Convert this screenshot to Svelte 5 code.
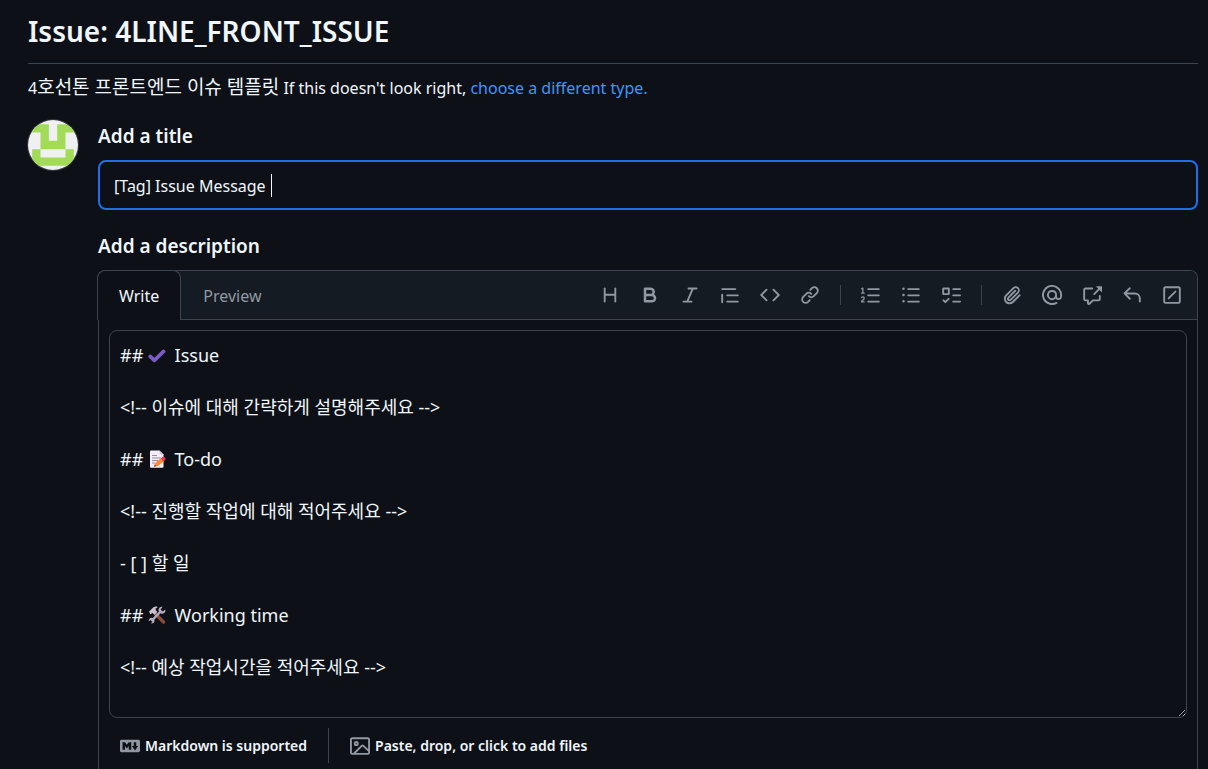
<script>
	let title = "[Tag] Issue Message ";
	let tab = "write";
	let body = [
		"## ✔️ Issue",
		"",
		"<!-- 이슈에 대해 간략하게 설명해주세요 -->",
		"",
		"## 📝 To-do",
		"",
		"<!-- 진행할 작업에 대해 적어주세요 -->",
		"",
		"- [ ] 할 일",
		"",
		"## 🛠️ Working time",
		"",
		"<!-- 예상 작업시간을 적어주세요 -->",
		"",
	].join("\n");

	const tools = [
		[
			{
				name: "Heading",
				d: "M3.75 2a.75.75 0 0 1 .75.75V7h7V2.75a.75.75 0 0 1 1.5 0v10.5a.75.75 0 0 1-1.5 0V8.5h-7v4.75a.75.75 0 0 1-1.5 0V2.75A.75.75 0 0 1 3.75 2Z",
			},
			{
				name: "Bold",
				d: "M4 2h4.5a3.501 3.501 0 0 1 2.852 5.53A3.499 3.499 0 0 1 9.5 14H4a1 1 0 0 1-1-1V3a1 1 0 0 1 1-1Zm1 7v3h4.5a1.5 1.5 0 0 0 0-3Zm3.5-2a1.5 1.5 0 0 0 0-3H5v3Z",
			},
			{
				name: "Italic",
				d: "M6 2.75A.75.75 0 0 1 6.75 2h6.5a.75.75 0 0 1 0 1.5h-2.505l-3.858 9H9.25a.75.75 0 0 1 0 1.5h-6.5a.75.75 0 0 1 0-1.5h2.505l3.858-9H6.75A.75.75 0 0 1 6 2.75Z",
			},
			{
				name: "Quote",
				d: "M1.75 2.5h10.5a.75.75 0 0 1 0 1.5H1.75a.75.75 0 0 1 0-1.5Zm4 5h8.5a.75.75 0 0 1 0 1.5h-8.5a.75.75 0 0 1 0-1.5Zm0 5h8.5a.75.75 0 0 1 0 1.5h-8.5a.75.75 0 0 1 0-1.5ZM2.5 7.75v6a.75.75 0 0 1-1.5 0v-6a.75.75 0 0 1 1.5 0Z",
			},
			{
				name: "Code",
				d: "m11.28 3.22 4.25 4.25a.75.75 0 0 1 0 1.06l-4.25 4.25a.749.749 0 0 1-1.275-.326.749.749 0 0 1 .215-.734L13.94 8l-3.72-3.72a.749.749 0 0 1 .326-1.275.749.749 0 0 1 .734.215Zm-6.56 0a.751.751 0 0 1 1.042.018.751.751 0 0 1 .018 1.042L2.06 8l3.72 3.72a.749.749 0 0 1-.326 1.275.749.749 0 0 1-.734-.215L.47 8.53a.75.75 0 0 1 0-1.06Z",
			},
			{
				name: "Link",
				d: "m7.775 3.275 1.25-1.25a3.5 3.5 0 1 1 4.95 4.95l-2.5 2.5a3.5 3.5 0 0 1-4.95 0 .751.751 0 0 1 .018-1.042.751.751 0 0 1 1.042-.018 1.998 1.998 0 0 0 2.83 0l2.5-2.5a2.002 2.002 0 0 0-2.83-2.83l-1.25 1.25a.751.751 0 0 1-1.042-.018.751.751 0 0 1-.018-1.042Zm-4.69 9.64a1.998 1.998 0 0 0 2.83 0l1.25-1.25a.751.751 0 0 1 1.042.018.751.751 0 0 1 .018 1.042l-1.25 1.25a3.5 3.5 0 1 1-4.95-4.95l2.5-2.5a3.5 3.5 0 0 1 4.95 0 .751.751 0 0 1-.018 1.042.751.751 0 0 1-1.042.018 1.998 1.998 0 0 0-2.83 0l-2.5 2.5a1.998 1.998 0 0 0 0 2.83Z",
			},
		],
		[
			{
				name: "Numbered list",
				d: "M5 3.25a.75.75 0 0 1 .75-.75h8.5a.75.75 0 0 1 0 1.5h-8.5A.75.75 0 0 1 5 3.25Zm0 5a.75.75 0 0 1 .75-.75h8.5a.75.75 0 0 1 0 1.5h-8.5A.75.75 0 0 1 5 8.25Zm0 5a.75.75 0 0 1 .75-.75h8.5a.75.75 0 0 1 0 1.5h-8.5a.75.75 0 0 1-.75-.75ZM.924 10.32a.5.5 0 0 1-.851-.525c.1-.16.219-.285.359-.4.228-.19.588-.395 1.068-.395.468 0 .858.181 1.126.484.259.294.377.673.377 1.038 0 .987-.686 1.495-1.156 1.845l-.047.035c-.303.225-.522.4-.654.598h1.357a.5.5 0 0 1 0 1H.5a.5.5 0 0 1-.5-.5c0-1.005.692-1.52 1.167-1.875l.035-.025c.531-.396.8-.625.8-1.078a.57.57 0 0 0-.128-.376C1.806 10.068 1.695 10 1.5 10a.658.658 0 0 0-.429.163.835.835 0 0 0-.147.157ZM2.003 2.5V6h.503a.5.5 0 0 1 0 1H.5a.5.5 0 0 1 0-1h.503V3.308l-.28.14a.5.5 0 0 1-.446-.895l1.003-.5a.5.5 0 0 1 .723.447Z",
			},
			{
				name: "Unordered list",
				d: "M5.75 2.5h8.5a.75.75 0 0 1 0 1.5h-8.5a.75.75 0 0 1 0-1.5Zm0 5h8.5a.75.75 0 0 1 0 1.5h-8.5a.75.75 0 0 1 0-1.5Zm0 5h8.5a.75.75 0 0 1 0 1.5h-8.5a.75.75 0 0 1 0-1.5ZM2 14a1 1 0 1 1 0-2 1 1 0 0 1 0 2Zm1-6a1 1 0 1 1-2 0 1 1 0 0 1 2 0ZM2 4a1 1 0 1 1 0-2 1 1 0 0 1 0 2Z",
			},
			{
				name: "Task list",
				d: "M2 2h4a1 1 0 0 1 1 1v4a1 1 0 0 1-1 1H2a1 1 0 0 1-1-1V3a1 1 0 0 1 1-1Zm4.655 8.595a.75.75 0 0 1 0 1.06L4.03 14.28a.75.75 0 0 1-1.06 0l-1.5-1.5a.749.749 0 0 1 .326-1.275.749.749 0 0 1 .734.215l.97.97 2.095-2.095a.75.75 0 0 1 1.06 0ZM9.75 2.5h5.5a.75.75 0 0 1 0 1.5h-5.5a.75.75 0 0 1 0-1.5Zm0 5h5.5a.75.75 0 0 1 0 1.5h-5.5a.75.75 0 0 1 0-1.5Zm0 5h5.5a.75.75 0 0 1 0 1.5h-5.5a.75.75 0 0 1 0-1.5Zm-7.25-9v3h3v-3Z",
			},
		],
		[
			{
				name: "Attach files",
				d: "M12.212 3.02a1.753 1.753 0 0 0-2.478.003l-5.83 5.83a3.007 3.007 0 0 0-.88 2.127c0 .795.315 1.551.88 2.116.567.567 1.333.89 2.126.89.79 0 1.548-.321 2.116-.89l5.48-5.48a.75.75 0 0 1 1.061 1.06l-5.48 5.48a4.492 4.492 0 0 1-3.177 1.33c-1.2 0-2.345-.487-3.187-1.33a4.483 4.483 0 0 1-1.32-3.177c0-1.195.475-2.341 1.32-3.186l5.83-5.83a3.25 3.25 0 0 1 5.553 2.297c0 .863-.343 1.691-.953 2.301L7.439 12.39c-.375.377-.884.59-1.416.593a1.998 1.998 0 0 1-1.412-.593 1.992 1.992 0 0 1 0-2.828l5.48-5.48a.751.751 0 0 1 1.042.018.751.751 0 0 1 .018 1.042l-5.48 5.48a.492.492 0 0 0 0 .707.499.499 0 0 0 .352.154.51.51 0 0 0 .356-.154l5.833-5.827a1.755 1.755 0 0 0 0-2.481Z",
			},
			{
				name: "Mention",
				d: "M4.75 2.37a6.501 6.501 0 0 0 6.5 11.26.75.75 0 0 1 .75 1.298A7.999 7.999 0 0 1 .989 4.148 8 8 0 0 1 16 7.75v1.5a2.75 2.75 0 0 1-5.072 1.475 3.999 3.999 0 0 1-6.65-4.19A4 4 0 0 1 12 8v1.25a1.25 1.25 0 0 0 2.5 0V7.867a6.5 6.5 0 0 0-9.75-5.496ZM10.5 8a2.5 2.5 0 1 0-5 0 2.5 2.5 0 0 0 5 0Z",
			},
			{
				name: "Reference",
				d: "M2.75 3.5a.25.25 0 0 0-.25.25v7.5c0 .138.112.25.25.25h2a.75.75 0 0 1 .75.75v2.19l2.72-2.72a.749.749 0 0 1 .53-.22h4.5a.25.25 0 0 0 .25-.25v-2.5a.75.75 0 0 1 1.5 0v2.5A1.75 1.75 0 0 1 13.25 13H9.06l-2.573 2.573A1.458 1.458 0 0 1 4 14.543V13H2.75A1.75 1.75 0 0 1 1 11.25v-7.5C1 2.784 1.784 2 2.75 2h5.5a.75.75 0 0 1 0 1.5ZM16 1.25v4.146a.25.25 0 0 1-.427.177L14.03 4.03l-3.75 3.75a.749.749 0 0 1-1.275-.326.749.749 0 0 1 .215-.734l3.75-3.75-1.543-1.543A.25.25 0 0 1 11.604 1h4.146a.25.25 0 0 1 .25.25Z",
			},
			{
				name: "Saved replies",
				d: "M6.78 1.97a.75.75 0 0 1 0 1.06L3.81 6h6.44A4.75 4.75 0 0 1 15 10.75v2.5a.75.75 0 0 1-1.5 0v-2.5a3.25 3.25 0 0 0-3.25-3.25H3.81l2.97 2.97a.749.749 0 0 1-.326 1.275.749.749 0 0 1-.734-.215L1.47 7.28a.75.75 0 0 1 0-1.06l4.25-4.25a.75.75 0 0 1 1.06 0Z",
			},
			{
				name: "Slash commands",
				d: "M13.25 1c.966 0 1.75.784 1.75 1.75v10.5A1.75 1.75 0 0 1 13.25 15H2.75A1.75 1.75 0 0 1 1 13.25V2.75C1 1.784 1.784 1 2.75 1ZM2.75 2.5a.25.25 0 0 0-.25.25v10.5c0 .138.112.25.25.25h10.5a.25.25 0 0 0 .25-.25V2.75a.25.25 0 0 0-.25-.25Zm8.53 3.28-5.5 5.5a.75.75 0 0 1-1.06-1.06l5.5-5.5a.75.75 0 0 1 1.06 1.06Z",
			},
		],
	];
</script>

<main>
	<header>
		<h1>Issue: 4LINE_FRONT_ISSUE</h1>
	</header>

	<p class="about">
		4<span lang="ko">호선톤 프론트엔드 이슈 템플릿</span> If this doesn't look right,
		<a href="#choose">choose a different type.</a>
	</p>

	<div class="issue">
		<svg class="avatar" viewBox="0 0 6 6" role="img" aria-label="avatar">
			<rect width="6" height="6" fill="#f0f0f0" />
			<path
				fill="#a1db58"
				d="M.5.5h2v2h1v-2h2v1h-1v2h1v2h-5v-2h1v-2h-1zM1.5 3.5v1h3v-1z"
				fill-rule="evenodd"
			/>
		</svg>

		<form on:submit|preventDefault>
			<label for="title">Add a title</label>
			<div class="title">
				<input id="title" type="text" bind:value={title} />
				<span class="caret"></span>
			</div>

			<label for="body">Add a description</label>
			<div class="editor">
				<div class="bar">
					<div class="tabs">
						<button type="button" class:active={tab === "write"} on:click={() => (tab = "write")}>
							Write
						</button>
						<button type="button" class:active={tab === "preview"} on:click={() => (tab = "preview")}>
							Preview
						</button>
					</div>
					<div class="tools">
						{#each tools as group}
							<div class="group">
								{#each group as t}
									<button type="button" aria-label={t.name}>
										<svg viewBox="0 0 16 16"><path d={t.d} /></svg>
									</button>
								{/each}
							</div>
						{/each}
					</div>
				</div>

				<div class="field">
					<textarea id="body" rows="14" spellcheck="false" bind:value={body}></textarea>

					<!-- own emoji set, laid over the system glyphs -->
					<span class="emoji check">
						<svg viewBox="0 0 18 18">
							<path
								d="M2.2 10.4 6.4 14.4 15.6 5.4"
								fill="none"
								stroke="#7b5cc6"
								stroke-width="3.6"
								stroke-linecap="round"
								stroke-linejoin="round"
							/>
						</svg>
					</span>
					<span class="emoji memo">
						<svg viewBox="0 0 18 18">
							<path d="M2 1.5Q2 .5 3 .5h8.5l4 4V17q0 .8-1 .8H3q-1 0-1-1z" fill="#f3eef8" />
							<path d="M11.5 .5v3q0 1 1 1h3z" fill="#cdc4d6" />
							<path d="M4 5.5h5M4 8h9M4 10.5h6M4 13h3" stroke="#998ea4" stroke-width="1" />
							<path d="M6 16.8 7.4 12.8 13.2 8 16 11.2 10 16z" fill="#ff8a33" />
							<path d="M6 16.8 6.8 14.4 8.4 16.1z" fill="#5b4a55" />
							<path d="m12.8 8.4 1.9-1.7q.8-.5 1.5.2l1.2 1.4q.5.8-.2 1.4l-1.6 1.7z" fill="#f4335a" />
						</svg>
					</span>
					<span class="emoji wrench">
						<svg viewBox="0 0 18 18">
							<path d="m7.5 8 8 8" stroke="#8a4b38" stroke-width="3.4" stroke-linecap="round" />
							<path d="M3.5 15 13.5 4.5" stroke="#b4acbc" stroke-width="2.4" />
							<path
								d="M14.6 .8 12.8 3.2l.4 1.8 1.8.3 2.3-1.9q.6 2.2-1 3.5-1.8 1.3-3.6.5L10.6 5.3Q10 3 11.4 1.7 12.8.3 14.6.8zM.8 15.6q-.5-2 .9-3.2 1.3-1.1 3-.5l1.6 1.5q.7 1.7-.4 3.1-1.2 1.2-2.9.9l1.3-1.7-.3-1.3-1.4-.3z"
								fill="#b4acbc"
							/>
							<path d="M1 5.4 5.8 1q1.6-1 3.3-.4l.4 1-1.9.9.2 1.7 1.5 1.7-2.8 2.9-1.9-1.9-2.3 1.4z" fill="#c9c1d0" />
						</svg>
					</span>
				</div>

				<div class="footer">
					<a href="#markdown">
						<svg viewBox="0 0 16 16">
							<path
								d="M14.85 3c.63 0 1.15.52 1.14 1.15v7.7c0 .63-.51 1.15-1.15 1.15H1.15C.52 13 0 12.48 0 11.84V4.15C0 3.52.52 3 1.15 3ZM9 11V5H7L5.5 7 4 5H2v6h2V8l1.5 1.92L7 8v3Zm2.99.5L14.5 8H13V5h-2v3H9.5Z"
							/>
						</svg>
						Markdown is supported
					</a>
					<button type="button">
						<svg viewBox="0 0 16 16">
							<path
								d="M16 13.25A1.75 1.75 0 0 1 14.25 15H1.75A1.75 1.75 0 0 1 0 13.25V2.75C0 1.784.784 1 1.75 1h12.5c.966 0 1.75.784 1.75 1.75ZM1.75 2.5a.25.25 0 0 0-.25.25v10.5c0 .138.112.25.25.25h.94l.03-.03 6.077-6.078a1.75 1.75 0 0 1 2.412-.06L14.5 10.31V2.75a.25.25 0 0 0-.25-.25Zm12.5 11a.25.25 0 0 0 .25-.25v-.917l-4.298-3.889a.25.25 0 0 0-.344.009L4.81 13.5ZM7 6a2 2 0 1 1-3.999.001A2 2 0 0 1 7 6ZM5.5 6a.5.5 0 1 0-1 0 .5.5 0 0 0 1 0Z"
							/>
						</svg>
						Paste, drop, or click to add files
					</button>
				</div>
			</div>
		</form>
	</div>
</main>

<style>
	:global(body) {
		background-color: #0d1117;
	}

	main {
		display: flex;
		flex-direction: column;
		box-sizing: border-box;
		min-height: 100vh;
		padding: 0 10px 0 28px;
		color: #f0f6fc;
		font-family: "Noto Sans", "Noto Sans CJK KR", sans-serif;
		font-size: 16px;
		line-height: 26px;
	}

	header {
		padding: 12px 0;
		border-bottom: 1px solid #3d444d;
	}

	h1 {
		margin: 0;
		font-size: 28px;
		font-weight: 600;
		line-height: 39px;
	}

	.about {
		margin: 10px 0 19px;
	}

	.about span {
		font-size: 19px;
	}

	a {
		color: #4493f8;
		text-decoration: none;
	}

	a:hover {
		text-decoration: underline;
	}

	button {
		padding: 0;
		border: none;
		background: none;
		color: inherit;
		font: inherit;
		cursor: pointer;
	}

	svg {
		display: block;
		fill: currentColor;
	}

	.issue {
		display: flex;
		flex-grow: 1;
		gap: 20px;
	}

	.avatar {
		flex-shrink: 0;
		width: 50px;
		height: 50px;
		border-radius: 50%;
		box-shadow: 0 0 0 1px #34393f;
	}

	form {
		display: flex;
		flex-direction: column;
		flex-grow: 1;
		min-width: 0;
	}

	label {
		margin: 3px 0 11px;
		font-size: 19px;
		font-weight: 600;
	}

	.title {
		position: relative;
		display: flex;
		margin-bottom: 20px;
	}

	input {
		flex-grow: 1;
		height: 50px;
		box-sizing: border-box;
		padding: 2px 14px 0;
		border: 2px solid #1f6feb;
		border-radius: 8px;
		outline: none;
		background-color: #0d1117;
		color: inherit;
		font: inherit;
	}

	.caret {
		position: absolute;
		top: 14px;
		left: 173px;
		width: 1px;
		height: 23px;
		background-color: #f0f6fc;
	}

	.editor {
		display: flex;
		flex-direction: column;
		flex-grow: 1;
		border: 1px solid #3d444d;
		border-bottom: none;
		border-radius: 8px 8px 0 0;
	}

	.bar {
		display: flex;
		justify-content: space-between;
		border-bottom: 1px solid #3d444d;
		border-radius: 7px 7px 0 0;
		background-color: #151b23;
	}

	.tabs {
		display: flex;
		margin: -1px 0 -1px -2px;
	}

	.tabs button {
		padding: 12px 21px 11px;
		border: 1px solid transparent;
		border-bottom: none;
		color: #9198a1;
	}

	.tabs .active {
		border-color: #3d444d;
		border-radius: 8px 8px 0 0;
		background-color: #0d1117;
		color: #f0f6fc;
	}

	.tools {
		display: flex;
		align-items: center;
		padding-right: 5px;
		color: #9198a1;
	}

	.group {
		display: flex;
	}

	.group + .group::before {
		content: "";
		align-self: center;
		width: 1px;
		height: 20px;
		margin: 0 10px;
		background-color: #3d444d;
	}

	.group button {
		padding: 10px;
	}

	.group svg {
		width: 20px;
		height: 20px;
	}

	.field {
		position: relative;
		display: flex;
		padding: 10px 10px 0;
	}

	textarea {
		flex-grow: 1;
		padding: 11px 10px;
		border: 1px solid #3d444d;
		border-radius: 8px;
		outline: none;
		background-color: #0d1117;
		color: inherit;
		font: inherit;
		font-size: 18px;
		resize: vertical;
	}

	.emoji {
		position: absolute;
		left: 48px;
		width: 24px;
		height: 26px;
		background-color: #0d1117;
		pointer-events: none;
	}

	.emoji svg {
		width: 18px;
		height: 18px;
		margin: 4px 1px;
	}

	.check {
		top: 22px;
	}

	.memo {
		top: 126px;
	}

	.wrench {
		top: 282px;
	}

	.footer {
		display: flex;
		padding: 10px 21px;
		font-size: 14px;
		font-weight: 600;
	}

	.footer a,
	.footer button {
		display: flex;
		align-items: center;
		gap: 5px;
		height: 35px;
		color: inherit;
	}

	.footer a {
		padding-right: 21px;
		border-right: 1px solid #3d444d;
	}

	.footer button {
		padding-left: 21px;
	}

	.footer svg {
		width: 20px;
		height: 20px;
		fill: #9198a1;
	}
</style>
